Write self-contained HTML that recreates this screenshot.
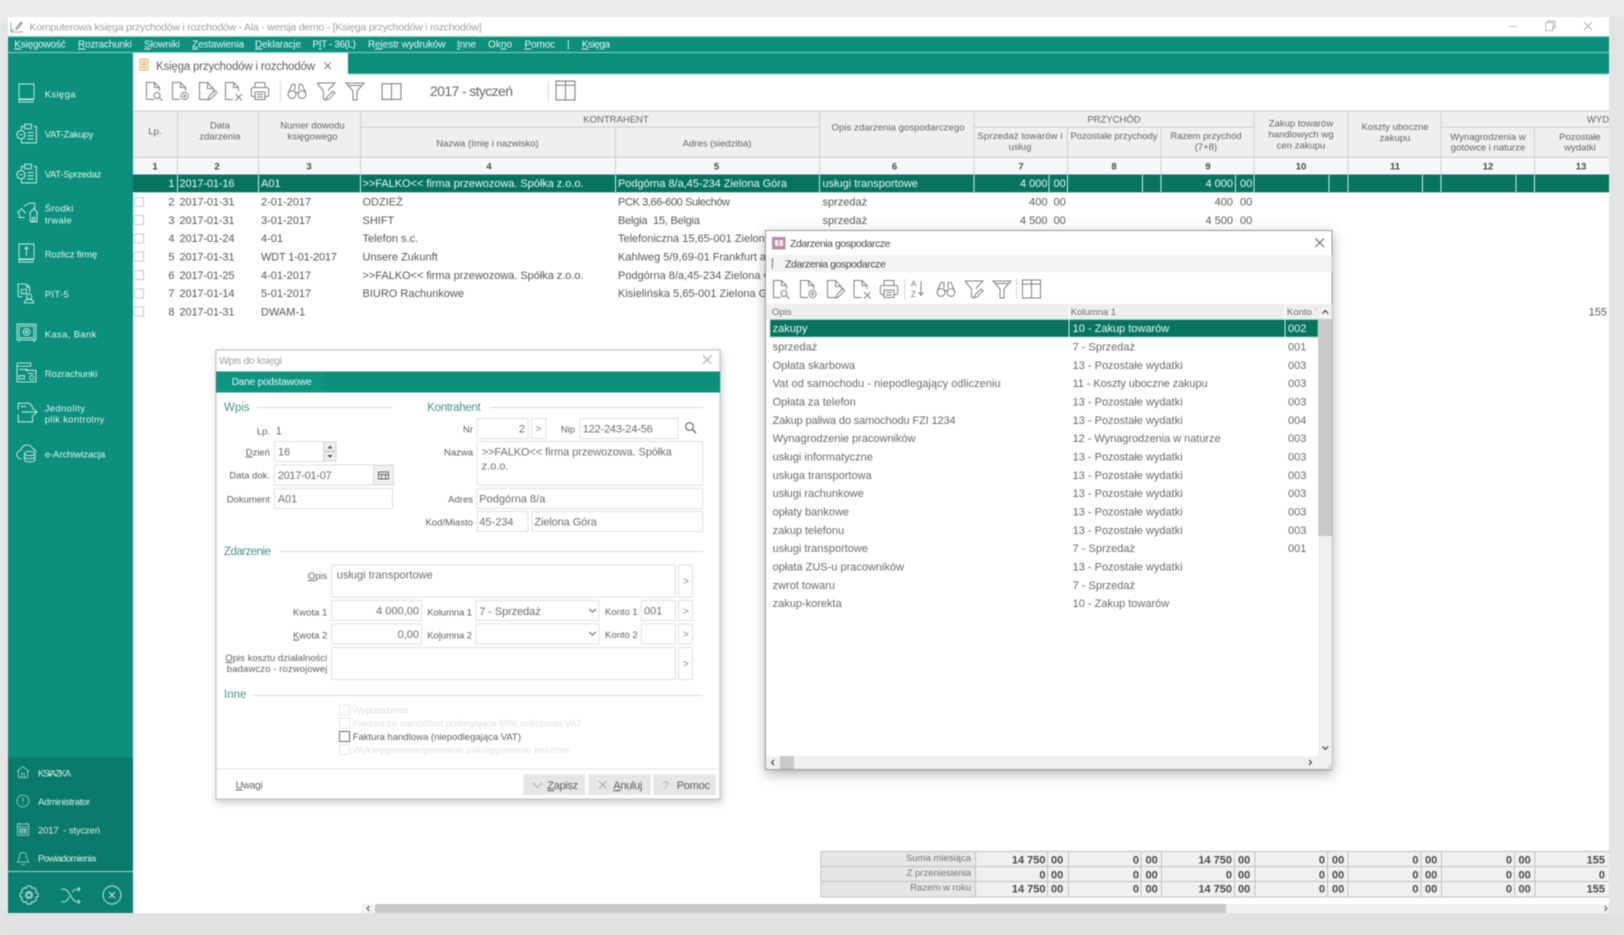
<!DOCTYPE html>
<html lang="pl">
<head>
<meta charset="utf-8">
<title>Księga przychodów i rozchodów</title>
<style>
html,body{margin:0;padding:0;width:1624px;height:935px;overflow:hidden;background:#e9ebec}
svg{display:block;filter:blur(.45px)}
text{font-family:"Liberation Sans",sans-serif;white-space:pre}
.t{font-size:11px;fill:#585858}
.w{font-size:11px;fill:#e8f8f4}
.h{font-size:9.5px;fill:#666;text-anchor:middle}
.n{font-size:9.5px;fill:#4a4a4a;text-anchor:middle;font-weight:bold}
.m{font-size:10px;fill:#e4f7f2}
.s{font-size:9.5px;fill:#dcf4ee;letter-spacing:.35px}
.f{font-size:9.5px;fill:#d6eee9}
.l{font-size:9.5px;fill:#5f5f5f;text-anchor:end}
.v{font-size:11px;fill:#6e6e6e}
.b{font-size:10px;fill:#888}
.sec{font-size:11.5px;fill:#4a968b}
.r{text-anchor:end}
.c{font-size:11px;fill:#6a6a6a}
.d{font-size:9.5px;fill:#e2e2e2}
.sum{font-size:11px;font-weight:bold;fill:#4a4a4a;text-anchor:end}
.sum0{font-size:11px;font-weight:bold;fill:#4a4a4a}
.sl{font-size:9.5px;fill:#777;text-anchor:end}
.fld{fill:#fff;stroke:#e0e0e0;stroke-width:1}
.ic{fill:none;stroke:#808080;stroke-width:1}
.sb{fill:none;stroke:#c9eee6;stroke-width:.9}
.ln{stroke:#cdcdcd;stroke-width:1}
.lt{stroke:#dadada;stroke-width:1}
.wl{stroke:#7ed4c4;stroke-width:1}
</style>
</head>
<body>
<svg xmlns="http://www.w3.org/2000/svg" width="1624" height="935" viewBox="0 0 1624 935">
<defs>
<symbol id="doc" viewBox="0 0 20 20"><path d="M2.5 18.5V1.5h8l5 5V10M10.5 1.5v5h5M2.5 18.5H10"/></symbol>
<symbol id="i-search" viewBox="0 0 20 20"><use href="#doc" width="20" height="20"/><circle cx="13" cy="14.5" r="3"/><path d="M15.2 16.7L18.5 19.7"/></symbol>
<symbol id="i-add" viewBox="0 0 20 20"><use href="#doc" width="20" height="20"/><circle cx="14.5" cy="15" r="3.6"/><circle cx="14.5" cy="15" r="1"/></symbol>
<symbol id="i-edit" viewBox="0 0 20 20"><path d="M2.5 18.5V1.5h8l6 6.5v3M10.5 1.5v6h6M2.5 18.5h8"/><path d="M11 19l1-3.5 6-6 2 2-6 6z"/></symbol>
<symbol id="i-del" viewBox="0 0 20 20"><use href="#doc" width="20" height="20"/><path d="M12.5 13l6.5 6.5m0-6.5L12.5 19.5"/></symbol>
<symbol id="i-print" viewBox="0 0 20 20"><path d="M5 6.5V1.5h10v5M5 15.5H3a1.7 1.7 0 0 1-1.7-1.7V8.5A2 2 0 0 1 3.300 6.5h13.4a2 2 0 0 1 2 2v5.3A1.7 1.7 0 0 1 17 15.5h-2M5 11h10v7.5H5zM7 13.5h6M7 16h6"/></symbol>
<symbol id="i-bin" viewBox="0 0 20 20"><circle cx="5" cy="13.5" r="3.9"/><circle cx="15" cy="13.5" r="3.9"/><path d="M8.5 11.5h3M1.5 11.5L5 3.500h3v6M18.5 11.5L15 3.500h-3v6"/></symbol>
<symbol id="i-fe" viewBox="0 0 20 20"><path d="M1 2h18l-7 7.500M1 2l6.5 8v8l2.500 1"/><path d="M10 19l1-3 6-6 2 2-6 6z"/></symbol>
<symbol id="i-f" viewBox="0 0 20 20"><path d="M1 2h18l-7 8v9H8v-9zM3 4.500h14"/></symbol>
<symbol id="i-book" viewBox="0 0 20 20"><path d="M1 3.500h18v15H1zM10 3.500v15"/></symbol>
<symbol id="i-cols" viewBox="0 0 20 20"><path d="M1 1h18v18H1zM10 1v18M1 5h18"/></symbol>
<symbol id="s-book" viewBox="0 0 20 20"><path d="M2 1h15v15H2zM2 1v18h15M2 16.5h15"/></symbol>
<symbol id="s-clip" viewBox="0 0 20 20"><path d="M7.5 4H5v3M5 15.5V19h13.5V4H16M8 2h6v4H8zM10.5 9.5h5.5M10.5 12.5h5.5M10.5 15.5h5.5"/><circle cx="4.5" cy="11.5" r="3.8"/><path d="M3 11.5h3"/></symbol>
<symbol id="s-asset" viewBox="0 0 20 20"><path d="M1 11l4-4 4 4M3 11v4h5M7 5l5-3h5v6M12 11l4-4 4 4M13 11v8h6v-8M15 19v-4h2v4"/></symbol>
<symbol id="s-up" viewBox="0 0 20 20"><path d="M2 1h15v15H2zM2 1v18h15M2 16.5h15M9.5 13V4M7.5 6l2-2 2 2"/></symbol>
<symbol id="s-pit" viewBox="0 0 20 20"><path d="M2 13V1h8l3 3v5M2 13h4M10 1v3h3M5 6h5v4H5z"/><circle cx="12.5" cy="13" r="2.5"/><path d="M8 19c.5-2.5 2.5-3.5 4.5-3.5s4 1 4.500 3.500z"/></symbol>
<symbol id="s-safe" viewBox="0 0 20 20"><path d="M1 2h18v15H1zM3 4h14v11H3zM3 17v2M17 17v2"/><circle cx="10" cy="9.5" r="3.3"/><circle cx="10" cy="9.5" r="1.2"/></symbol>
<symbol id="s-roz" viewBox="0 0 20 20"><path d="M1 1h13v3H1zM1 4v15h13M3 7h8M3 13h5v3H3zM9 8h10v11h-5M11 11h6"/><circle cx="15" cy="15" r="2"/></symbol>
<symbol id="s-jpk" viewBox="0 0 20 20"><path d="M2 8V2h10l3 3v3M2 12v7h13v-6M5 10h14m-3-3l3 3-3 3M4 5h5"/></symbol>
<symbol id="s-cloud" viewBox="0 0 20 20"><path d="M5 16a4 4 0 0 1-.5-8A6 6 0 0 1 16 6.500a4 4 0 0 1 3 3.500"/><ellipse cx="13" cy="11" rx="5" ry="2"/><path d="M8 11v6c0 1 2 2 5 2s5-1 5-2v-6M8 14c0 1 2 2 5 2s5-1 5-2"/></symbol>
<symbol id="s-home" viewBox="0 0 20 20"><path d="M1 10L10 2l9 8M3.5 8v10h13V8M8 18v-6h4v6"/></symbol>
<symbol id="s-adm" viewBox="0 0 20 20"><circle cx="10" cy="10" r="8.5"/><path d="M10 5v6.500M10 13.500v1.500"/></symbol>
<symbol id="s-cal" viewBox="0 0 20 20"><path d="M2 3h16v16H2zM2 7h16M5 1v3M15 1v3M5 10h10v6H5zM8 10v6M12 10v6M5 13h10"/></symbol>
<symbol id="s-bell" viewBox="0 0 20 20"><path d="M10 2a5 5 0 0 0-5 5c0 5-2 7-3 9h16c-1-2-3-4-3-9a5 5 0 0 0-5-5zM8 18a2 2 0 0 0 4 0"/></symbol>
<symbol id="s-gear" viewBox="0 0 20 20"><path d="M8 1h4l.8 2.5 2-.8 2.700 2.700-.9 2 2.400.8v3.600l-2.400.8.900 2-2.700 2.700-2-.8L12 19H8l-.8-2.5-2 .8-2.700-2.700.9-2L1 11.800V8.200l2.400-.8-.9-2 2.700-2.700 2 .8z"/><circle cx="10" cy="10" r="3.5"/><circle cx="10" cy="10" r="2"/></symbol>
<symbol id="s-shuf" viewBox="0 0 20 20"><path d="M1 4h3c5 0 7 12 12 12h3M1 16h3c2 0 3.500-2 5-5M11.500 7C13 5.200 14.200 4 16 4h3M17 2l2 2-2 2M17 14l2 2-2 2"/></symbol>
<symbol id="s-xc" viewBox="0 0 20 20"><circle cx="10" cy="10" r="9"/><path d="M7 7l6 6m0-6l-6 6"/></symbol>
</defs>

<!-- page frame -->
<rect width="1624" height="935" fill="#e9ebec"/>
<rect x="0" y="905" width="1624" height="30" fill="#dfe1e2"/>
<rect x="0" y="20" width="8" height="890" fill="#e3e5e6"/>
<rect x="1609" y="17" width="15" height="900" fill="#e2e4e5"/>
<rect x="8" y="17" width="1601" height="896" fill="#fff"/>

<!-- title bar -->
<path d="M11 22v10h12M11 32l3-3" fill="none" stroke="#9aa"/>
<path d="M15 29l6-8 2 2-6 7z" fill="#a0a4aa"/>
<text x="29.5" y="30.5" font-size="10.5" fill="#a2a2a2" textLength="452">Komputerowa księga przychodów i rozchodów - Ala - wersja demo - [Księga przychodów i rozchodów]</text>
<path d="M1509 26.500h8" stroke="#c0c0c0"/>
<path d="M1546 22.500h7v8h-7zM1548 22.500v-1.500h7v7h-2" fill="none" stroke="#b5b5b5"/>
<path d="M1584 22l8 8m0-8l-8 8" stroke="#b0b0b0"/>

<!-- menu + tab bar -->
<rect x="8" y="36" width="1601" height="38" fill="#0e8f7c"/>
<line x1="8" y1="36.5" x2="1609" y2="36.5" class="wl"/>
<line x1="8" y1="52.5" x2="1609" y2="52.5" class="wl"/>
<line x1="348" y1="74" x2="1609" y2="74" class="wl"/>
<text class="m" x="14.3" y="47.5" textLength="51.3"><tspan text-decoration="underline">K</tspan>sięgowość</text>
<text class="m" x="78" y="47.5" textLength="54"><tspan text-decoration="underline">R</tspan>ozrachunki</text>
<text class="m" x="144" y="47.5" textLength="36"><tspan text-decoration="underline">S</tspan>łowniki</text>
<text class="m" x="192" y="47.5" textLength="52"><tspan text-decoration="underline">Z</tspan>estawienia</text>
<text class="m" x="255" y="47.5" textLength="46"><tspan text-decoration="underline">D</tspan>eklaracje</text>
<text class="m" x="312.5" y="47.5" textLength="43.5">P<tspan text-decoration="underline">I</tspan>T - 36(L)</text>
<text class="m" x="368" y="47.5" textLength="77.5">R<tspan text-decoration="underline">e</tspan>jestr wydruków</text>
<text class="m" x="457" y="47.5" textLength="19"><tspan text-decoration="underline">I</tspan>nne</text>
<text class="m" x="488" y="47.5" textLength="24">Ok<tspan text-decoration="underline">n</tspan>o</text>
<text class="m" x="524.5" y="47.5" textLength="30.5"><tspan text-decoration="underline">P</tspan>omoc</text>
<text class="m" x="567" y="47.5">|</text>
<text class="m" x="581.7" y="47.5" textLength="28.3"><tspan text-decoration="underline">K</tspan>sięga</text>

<!-- tab -->
<rect x="133" y="53" width="215" height="22" fill="#fff"/>
<rect x="140" y="59" width="8" height="11" fill="#f6ead0" stroke="#e2b878"/>
<path d="M142 62h4M142 64.500h4M142 67h4" stroke="#d8a050"/>
<text x="156" y="70" font-size="11.5" fill="#606060" textLength="159">Księga przychodów i rozchodów</text>
<path d="M324.500 62.500l6.500 6.500m0-6.500l-6.500 6.500" stroke="#777"/>

<!-- sidebar -->
<rect x="8" y="53" width="125" height="860" fill="#0c8f7c"/>
<rect x="8" y="757.5" width="125" height="113.5" fill="#0a7b6b"/>
<rect x="8" y="872" width="125" height="41" fill="#0b8070"/>
<line x1="8" y1="871.5" x2="133" y2="871.5" stroke="#8ad8c9"/>
<g class="sb">
<use href="#s-book" x="17" y="83" width="20" height="20"/>
<use href="#s-clip" x="16" y="122" width="22" height="22"/>
<use href="#s-clip" x="16" y="162" width="22" height="22"/>
<use href="#s-asset" x="16" y="201" width="22" height="22"/>
<use href="#s-up" x="17" y="242" width="20" height="22"/>
<use href="#s-pit" x="16" y="283" width="21" height="21"/>
<use href="#s-safe" x="16" y="322" width="21" height="21"/>
<use href="#s-roz" x="16" y="362" width="21" height="21"/>
<use href="#s-jpk" x="16" y="401" width="22" height="22"/>
<use href="#s-cloud" x="16" y="442" width="21" height="21"/>
<use href="#s-home" x="16" y="765" width="14" height="14"/>
<use href="#s-adm" x="16" y="794" width="14" height="14"/>
<use href="#s-cal" x="16" y="822" width="14" height="14"/>
<use href="#s-bell" x="16" y="851" width="14" height="14"/>
<use href="#s-gear" x="19" y="885" width="20" height="20"/>
<use href="#s-shuf" x="60" y="885" width="21" height="21"/>
<use href="#s-xc" x="102" y="885" width="20" height="20"/>
</g>
<text class="s" x="44.7" y="97.5">Księga</text>
<text class="s" x="44.7" y="137.5" textLength="49">VAT-Zakupy</text>
<text class="s" x="44.7" y="177.5" textLength="57">VAT-Sprzedaż</text>
<text class="s" x="44.7" y="211.5">Środki</text>
<text class="s" x="44.7" y="223.5">trwałe</text>
<text class="s" x="44.7" y="257.5" textLength="53">Rozlicz firmę</text>
<text class="s" x="44.7" y="297.5">PIT-5</text>
<text class="s" x="44.7" y="337.5">Kasa, Bank</text>
<text class="s" x="44.7" y="377" textLength="53">Rozrachunki</text>
<text class="s" x="44.7" y="411.5">Jednolity</text>
<text class="s" x="44.7" y="422.5" textLength="60">plik kontrolny</text>
<text class="s" x="44.7" y="457.5" textLength="61">e-Archiwizacja</text>
<text class="f" x="38" y="776.5" textLength="33">KSIAZKA</text>
<text class="f" x="38" y="805" textLength="52">Administrator</text>
<text class="f" x="38" y="833.5" textLength="62">2017  - styczeń</text>
<text class="f" x="38" y="861.5" textLength="58">Powiadomienia</text>

<!-- main toolbar -->
<g class="ic">
<use href="#i-search" x="144" y="81" width="20" height="20"/>
<use href="#i-add" x="170" y="81" width="20" height="20"/>
<use href="#i-edit" x="197" y="81" width="20" height="20"/>
<use href="#i-del" x="223" y="81" width="20" height="20"/>
<use href="#i-print" x="250" y="81" width="20" height="20"/>
<use href="#i-bin" x="287" y="81" width="20" height="20"/>
<use href="#i-fe" x="316" y="81" width="20" height="20"/>
<use href="#i-f" x="345" y="81" width="20" height="20"/>
<use href="#i-book" x="381" y="80" width="21" height="21"/>
<use href="#i-cols" x="555" y="80" width="21" height="21"/>
</g>
<path d="M280.5 81v20M548.5 81v20" stroke="#d6d6d6"/>
<text x="430" y="96" font-size="14" fill="#6a6a6a" textLength="83">2017 - styczeń</text>

<!-- table header -->
<rect x="133" y="111" width="1476" height="46" fill="#f0efef"/>
<rect x="133" y="157" width="1476" height="17.5" fill="#f7f7f7"/>
<g class="ln">
<line x1="133" y1="111" x2="1609" y2="111"/>
<line x1="360" y1="127" x2="820" y2="127"/>
<line x1="974" y1="127" x2="1254" y2="127"/>
<line x1="1441" y1="127" x2="1609" y2="127"/>
<line x1="133" y1="157.5" x2="1609" y2="157.5"/>
<line x1="177.5" y1="111" x2="177.5" y2="174"/>
<line x1="258.5" y1="111" x2="258.5" y2="174"/>
<line x1="360.5" y1="111" x2="360.5" y2="174"/>
<line x1="615.5" y1="127" x2="615.5" y2="174"/>
<line x1="819.5" y1="111" x2="819.5" y2="174"/>
<line x1="974" y1="111" x2="974" y2="174"/>
<line x1="1067.5" y1="127" x2="1067.5" y2="174"/>
<line x1="1161" y1="127" x2="1161" y2="174"/>
<line x1="1254" y1="111" x2="1254" y2="174"/>
<line x1="1348" y1="111" x2="1348" y2="174"/>
<line x1="1441" y1="111" x2="1441" y2="174"/>
<line x1="1534.5" y1="127" x2="1534.5" y2="174"/>
</g>
<text class="h" x="155" y="134.5">Lp.</text>
<text class="h" x="220" y="128.5">Data</text>
<text class="h" x="220" y="139.5">zdarzenia</text>
<text class="h" x="312.5" y="128.5">Numer dowodu</text>
<text class="h" x="312.5" y="139.5">księgowego</text>
<text class="h" x="616" y="122.5">KONTRAHENT</text>
<text class="h" x="487.5" y="146.5">Nazwa (Imię i nazwisko)</text>
<text class="h" x="717" y="146.5">Adres (siedziba)</text>
<text class="h" x="898" y="130.5" textLength="133">Opis zdarzenia gospodarczego</text>
<text class="h" x="1114" y="122.5">PRZYCHÓD</text>
<text class="h" x="1020" y="139" textLength="85">Sprzedaż towarów i</text>
<text class="h" x="1020" y="150">usług</text>
<text class="h" x="1114" y="139" textLength="87">Pozostałe przychody</text>
<text class="h" x="1206" y="139">Razem przychód</text>
<text class="h" x="1206" y="150">(7+8)</text>
<text class="h" x="1301" y="126.5">Zakup towarów</text>
<text class="h" x="1301" y="137.5">handlowych wg</text>
<text class="h" x="1301" y="148.5">cen zakupu</text>
<text class="h" x="1395" y="130">Koszty uboczne</text>
<text class="h" x="1395" y="141">zakupu</text>
<text class="h" x="1598" y="122.5">WYD</text>
<text class="h" x="1488" y="140">Wynagrodzenia w</text>
<text class="h" x="1488" y="150.5">gotówce i naturze</text>
<text class="h" x="1580" y="140">Pozostałe</text>
<text class="h" x="1580" y="150.5">wydatki</text>
<text class="n" x="155" y="169.5">1</text>
<text class="n" x="217" y="169.5">2</text>
<text class="n" x="309" y="169.5">3</text>
<text class="n" x="489" y="169.5">4</text>
<text class="n" x="716.5" y="169.5">5</text>
<text class="n" x="894.5" y="169.5">6</text>
<text class="n" x="1021" y="169.5">7</text>
<text class="n" x="1114" y="169.5">8</text>
<text class="n" x="1208" y="169.5">9</text>
<text class="n" x="1301" y="169.5">10</text>
<text class="n" x="1395" y="169.5">11</text>
<text class="n" x="1488" y="169.5">12</text>
<text class="n" x="1581" y="169.5">13</text>

<!-- selected row -->
<rect x="133" y="174.5" width="1476" height="17.8" fill="#06745f"/>
<path stroke="#cfeee7" fill="none" d="M177.5 175v17M258.5 175v17M360.5 175v17M615.5 175v17M819.5 175v17M974 175v17M1049 175v17M1067.5 175v17M1142.5 175v17M1161 175v17M1235.5 175v17M1254 175v17M1329 175v17M1348 175v17M1422.5 175v17M1441 175v17M1516 175v17M1534.5 175v17"/>
<text class="w r" x="174.5" y="187">1</text>
<text class="w" x="179.5" y="187" textLength="55">2017-01-16</text>
<text class="w" x="261" y="187">A01</text>
<text class="w" x="362.5" y="187" textLength="221">&gt;&gt;FALKO&lt;&lt; firma przewozowa. Spółka z.o.o.</text>
<text class="w" x="618" y="187" textLength="169">Podgórna 8/a,45-234 Zielona Góra</text>
<text class="w" x="822.5" y="187">usługi transportowe</text>
<text class="w r" x="1047.5" y="187">4 000</text>
<text class="w" x="1053.5" y="187">00</text>
<text class="w r" x="1233" y="187">4 000</text>
<text class="w" x="1240" y="187">00</text>

<!-- rows -->
<g fill="#fff" stroke="#c8c8c8">
<rect x="134.5" y="197.5" width="9" height="9"/>
<rect x="134.5" y="215.5" width="9" height="9"/>
<rect x="134.5" y="234" width="9" height="9"/>
<rect x="134.5" y="252" width="9" height="9"/>
<rect x="134.5" y="270.5" width="9" height="9"/>
<rect x="134.5" y="289" width="9" height="9"/>
<rect x="134.5" y="307" width="9" height="9"/>
</g>
<text class="t r" x="174.5" y="205.5">2</text><text class="t" x="179.5" y="205.5" textLength="55">2017-01-31</text><text class="t" x="261" y="205.5">2-01-2017</text><text class="t" x="362.5" y="205.5">ODZIEŻ</text><text class="t" x="618" y="205.5" textLength="112">PCK 3,66-600 Sulechów</text><text class="t" x="822.5" y="205.5">sprzedaż</text><text class="t r" x="1047.5" y="205.5">400</text><text class="t" x="1053.5" y="205.5">00</text><text class="t r" x="1233" y="205.5">400</text><text class="t" x="1240" y="205.5">00</text>
<text class="t r" x="174.5" y="224">3</text><text class="t" x="179.5" y="224" textLength="55">2017-01-31</text><text class="t" x="261" y="224">3-01-2017</text><text class="t" x="362.5" y="224">SHIFT</text><text class="t" x="618" y="224" textLength="82">Belgia  15, Belgia</text><text class="t" x="822.5" y="224">sprzedaż</text><text class="t r" x="1047.5" y="224">4 500</text><text class="t" x="1053.5" y="224">00</text><text class="t r" x="1233" y="224">4 500</text><text class="t" x="1240" y="224">00</text>
<text class="t r" x="174.5" y="242">4</text><text class="t" x="179.5" y="242" textLength="55">2017-01-24</text><text class="t" x="261" y="242">4-01</text><text class="t" x="362.5" y="242">Telefon s.c.</text><text class="t" x="618" y="242">Telefoniczna 15,65-001 Zielona Góra</text>
<text class="t r" x="174.5" y="260.5">5</text><text class="t" x="179.5" y="260.5" textLength="55">2017-01-31</text><text class="t" x="261" y="260.5" textLength="76">WDT 1-01-2017</text><text class="t" x="362.5" y="260.5">Unsere Zukunft</text><text class="t" x="618" y="260.5">Kahlweg 5/9,69-01 Frankfurt am Oder</text>
<text class="t r" x="174.5" y="279">6</text><text class="t" x="179.5" y="279" textLength="55">2017-01-25</text><text class="t" x="261" y="279">4-01-2017</text><text class="t" x="362.5" y="279" textLength="221">&gt;&gt;FALKO&lt;&lt; firma przewozowa. Spółka z.o.o.</text><text class="t" x="618" y="279">Podgórna 8/a,45-234 Zielona Góra</text>
<text class="t r" x="174.5" y="297">7</text><text class="t" x="179.5" y="297" textLength="55">2017-01-14</text><text class="t" x="261" y="297">5-01-2017</text><text class="t" x="362.5" y="297">BIURO Rachunkowe</text><text class="t" x="618" y="297">Kisielińska 5,65-001 Zielona Góra</text>
<text class="t r" x="174.5" y="315.5">8</text><text class="t" x="179.5" y="315.5" textLength="55">2017-01-31</text><text class="t" x="261" y="315.5">DWAM-1</text><text class="t r" x="1607" y="315.5">155</text>

<!-- summary -->
<rect x="821" y="851" width="155" height="46" fill="#e6e6e6"/>
<rect x="976" y="851" width="633" height="46" fill="#f0f0f0"/>
<path stroke="#c2c2c2" fill="none" d="M821 851.5h788M821 866.5h788M821 881.5h788M821 897h788M821 851v46M975.5 851v46M1047.5 851v46M1068.5 851v46M1141 851v46M1161.5 851v46M1234.5 851v46M1255 851v46M1327.5 851v46M1348 851v46M1421 851v46M1441.5 851v46M1514.5 851v46M1535 851v46"/>
<text class="sl" x="971" y="861">Suma miesiąca</text>
<text class="sl" x="971" y="876">Z przeniesienia</text>
<text class="sl" x="971" y="890.5">Razem w roku</text>
<text class="sum" x="1045.5" y="863.5">14 750</text><text class="sum0" x="1051" y="863.5">00</text><text class="sum" x="1139" y="863.5">0</text><text class="sum0" x="1145.5" y="863.5">00</text><text class="sum" x="1232" y="863.5">14 750</text><text class="sum0" x="1238" y="863.5">00</text><text class="sum" x="1325" y="863.5">0</text><text class="sum0" x="1332" y="863.5">00</text><text class="sum" x="1418.5" y="863.5">0</text><text class="sum0" x="1425" y="863.5">00</text><text class="sum" x="1512" y="863.5">0</text><text class="sum0" x="1518.5" y="863.5">00</text><text class="sum" x="1605" y="863.5">155</text>
<text class="sum" x="1045.5" y="878.5">0</text><text class="sum0" x="1051" y="878.5">00</text><text class="sum" x="1139" y="878.5">0</text><text class="sum0" x="1145.5" y="878.5">00</text><text class="sum" x="1232" y="878.5">0</text><text class="sum0" x="1238" y="878.5">00</text><text class="sum" x="1325" y="878.5">0</text><text class="sum0" x="1332" y="878.5">00</text><text class="sum" x="1418.5" y="878.5">0</text><text class="sum0" x="1425" y="878.5">00</text><text class="sum" x="1512" y="878.5">0</text><text class="sum0" x="1518.5" y="878.5">00</text><text class="sum" x="1605" y="878.5">0</text>
<text class="sum" x="1045.5" y="892.5">14 750</text><text class="sum0" x="1051" y="892.5">00</text><text class="sum" x="1139" y="892.5">0</text><text class="sum0" x="1145.5" y="892.5">00</text><text class="sum" x="1232" y="892.5">14 750</text><text class="sum0" x="1238" y="892.5">00</text><text class="sum" x="1325" y="892.5">0</text><text class="sum0" x="1332" y="892.5">00</text><text class="sum" x="1418.5" y="892.5">0</text><text class="sum0" x="1425" y="892.5">00</text><text class="sum" x="1512" y="892.5">0</text><text class="sum0" x="1518.5" y="892.5">00</text><text class="sum" x="1605" y="892.5">155</text>

<!-- main h-scroll -->
<rect x="362" y="904" width="1247" height="9" fill="#f1f1f1"/>
<rect x="375" y="904" width="851" height="9" fill="#c9c9c9"/>
<path d="M369.5 906l-2.500 2.500 2.500 2.500M1604.5 906l2.500 2.500-2.500 2.500" fill="none" stroke="#555"/>

<!-- dialog: Wpis do ksiegi -->
<rect x="216" y="350" width="504" height="449" fill="#fff" stroke="#bdbdbd" style="filter:drop-shadow(1px 3px 4px rgba(0,0,0,.22))"/>
<text x="219" y="364" font-size="10.5" fill="#a2a2a2" textLength="63">Wpis do księgi</text>
<path d="M703 355.5l8.5 8.5m0-8.5l-8.5 8.5" stroke="#aaa"/>
<rect x="216" y="371.5" width="504" height="21" fill="#0c8f7c"/>
<rect x="216" y="371.5" width="109" height="21" fill="#0f9482"/>
<text x="231.7" y="385" font-size="10" fill="#e0f7f1" textLength="80">Dane podstawowe</text>

<text class="sec" x="224" y="411">Wpis</text><line class="lt" x1="257" y1="407.5" x2="393" y2="407.5"/>
<text class="sec" x="427.3" y="411" textLength="53.4">Kontrahent</text><line class="lt" x1="490" y1="407.5" x2="703" y2="407.5"/>
<text class="l" x="270" y="434.5">Lp.</text><text class="v" x="275.7" y="434.5" font-size="10">1</text>

<rect class="fld" x="274.5" y="441.5" width="49" height="20"/>
<text class="v" x="278" y="455.5">16</text>
<rect x="324" y="442" width="12" height="9" fill="#eee" stroke="#d2d2d2"/>
<rect x="324" y="452" width="12" height="9" fill="#eee" stroke="#d2d2d2"/>
<path d="M327.5 448.5l2.500-3 2.500 3zM327.5 455l2.500 3 2.500-3z" fill="#555"/>
<text class="l" x="270" y="455.5"><tspan text-decoration="underline">D</tspan>zień</text>

<rect class="fld" x="274.5" y="465" width="99" height="20"/>
<rect x="373.5" y="465" width="20" height="20" fill="#efefef" stroke="#dcdcdc"/>
<path d="M378.5 472h10v7h-10zM378.5 474.5h10M381.5 474.5v4.500M385.5 474.5v4.500" fill="none" stroke="#666"/>
<text class="v" x="277.7" y="479" textLength="54">2017-01-07</text>
<text class="l" x="270" y="478.5">Data dok.</text>

<rect class="fld" x="274.5" y="488.5" width="118" height="20"/>
<text class="v" x="277.7" y="502.5">A01</text>
<text class="l" x="270" y="502.5">Dokument</text>

<text class="l" x="473" y="432.5">Nr</text>
<rect class="fld" x="477" y="418.5" width="51" height="20"/>
<text class="v r" x="525" y="432.5">2</text>
<rect class="fld" x="531.5" y="418.5" width="14.5" height="20"/>
<text class="b" x="535.5" y="432">&gt;</text>
<text class="l" x="575" y="432.5">Nip</text>
<rect class="fld" x="580" y="418.5" width="98" height="20"/>
<text class="v" x="582.7" y="432.5" textLength="70">122-243-24-56</text>
<circle cx="689.5" cy="426.5" r="3.8" fill="none" stroke="#666" stroke-width="1.1"/>
<path d="M692.5 429.5l3.500 3.500" stroke="#666" stroke-width="1.3"/>

<text class="l" x="473" y="455.5">Nazwa</text>
<rect class="fld" x="477" y="441.5" width="225.5" height="43.5"/>
<text class="v" x="481.7" y="455.5" textLength="190">&gt;&gt;FALKO&lt;&lt; firma przewozowa. Spółka</text>
<text class="v" x="481.7" y="469.5">z.o.o.</text>

<text class="l" x="473" y="502.5">Adres</text>
<rect class="fld" x="477" y="488.5" width="225.5" height="20"/>
<text class="v" x="479.3" y="502.5">Podgórna 8/a</text>
<text class="l" x="473" y="525.5">Kod/Miasto</text>
<rect class="fld" x="477" y="511.5" width="51" height="20"/>
<text class="v" x="479.3" y="525.5">45-234</text>
<rect class="fld" x="532" y="511.5" width="170.5" height="20"/>
<text class="v" x="534.3" y="525.5" textLength="62.5">Zielona Góra</text>

<text class="sec" x="224" y="555" textLength="47">Zdarzenie</text><line class="lt" x1="279" y1="551.5" x2="703" y2="551.5"/>
<text class="l" x="327.3" y="579"><tspan text-decoration="underline">O</tspan>pis</text>
<rect class="fld" x="331.5" y="565" width="344" height="32"/>
<text class="v" x="336.7" y="578.5" textLength="96">usługi transportowe</text>
<rect class="fld" x="678.5" y="565" width="14" height="32"/>
<text class="b" x="683" y="584.5">&gt;</text>

<text class="l" x="327.3" y="615.5">Kwota 1</text>
<rect class="fld" x="331.5" y="600.5" width="90" height="20"/>
<text class="v r" x="419" y="614.5">4 000,00</text>
<text x="427.3" y="615.5" font-size="9.5" fill="#5f5f5f" textLength="44.7">Kolumna 1</text>
<rect class="fld" x="476" y="600.5" width="123" height="20"/>
<text class="v" x="479.3" y="615" textLength="61.4">7 - Sprzedaż</text>
<path d="M589 609l3.500 3 3.500-3" fill="none" stroke="#666" stroke-width="1.1"/>
<text x="605" y="615" font-size="9.5" fill="#5f5f5f" textLength="32.7">Konto 1</text>
<rect class="fld" x="641.5" y="600.5" width="34" height="20"/>
<text class="v" x="644" y="614.5">001</text>
<rect class="fld" x="678.5" y="600.5" width="14" height="20"/>
<text class="b" x="683" y="614.5">&gt;</text>

<text class="l" x="327.3" y="638.5"><tspan text-decoration="underline">K</tspan>wota 2</text>
<rect class="fld" x="331.5" y="624" width="90" height="20"/>
<text class="v r" x="419" y="638">0,00</text>
<text x="427.3" y="638.5" font-size="9.5" fill="#5f5f5f" textLength="44.7">Ko<tspan text-decoration="underline">l</tspan>umna 2</text>
<rect class="fld" x="476" y="624" width="123" height="20"/>
<path d="M589 632l3.500 3 3.500-3" fill="none" stroke="#666" stroke-width="1.1"/>
<text x="605" y="638" font-size="9.5" fill="#5f5f5f" textLength="32.7">Konto 2</text>
<rect class="fld" x="641.5" y="624" width="34" height="20"/>
<rect class="fld" x="678.5" y="624" width="14" height="20"/>
<text class="b" x="683" y="637.5">&gt;</text>

<text class="l" x="327.3" y="661" textLength="102"><tspan text-decoration="underline">O</tspan>pis kosztu działalności</text>
<text class="l" x="327.3" y="672" textLength="100.5">badawczo - rozwojowej</text>
<rect class="fld" x="331.5" y="647.5" width="344" height="32"/>
<rect class="fld" x="678.5" y="647.5" width="14" height="32"/>
<text class="b" x="683" y="667">&gt;</text>

<text class="sec" x="224" y="698">Inne</text><line class="lt" x1="253.3" y1="695.5" x2="702.7" y2="695.5"/>
<g fill="#fff" stroke="#e6e6e6">
<rect x="339.5" y="705" width="10" height="10"/>
<rect x="339.5" y="718" width="10" height="10"/>
<rect x="339.5" y="744.5" width="10" height="10"/>
</g>
<rect x="339.5" y="731.5" width="10" height="10" fill="#fff" stroke="#666"/>
<text class="d" x="352.7" y="713.5" textLength="55.3">Wyposażenie</text>
<text class="d" x="352.7" y="726.7" textLength="229">Faktura za samochód podlegająca 50% odliczeniu VAT</text>
<text x="352.7" y="740" font-size="9.5" fill="#5f5f5f" textLength="168.3">Faktura handlowa (niepodlegająca VAT)</text>
<text class="d" x="352.7" y="753" textLength="216.6">Wyksięgowanie/ponowne zaksięgowanie kosztów</text>

<line x1="216" y1="769" x2="720" y2="769" stroke="#e2e2e2"/>
<text x="235.7" y="788.5" font-size="10" fill="#5f5f5f" textLength="27"><tspan text-decoration="underline">U</tspan>wagi</text>
<rect x="523.3" y="774.3" width="62" height="20.7" fill="#e6e6e6"/>
<rect x="588.3" y="774.3" width="62.4" height="20.7" fill="#e6e6e6"/>
<rect x="653.3" y="774.3" width="62.4" height="20.7" fill="#e6e6e6"/>
<path d="M533 783l4.500 4.500 4.500-4.500" fill="none" stroke="#aaa"/>
<path d="M599 781l7.500 7.500m0-7.500l-7.500 7.500" stroke="#aaa"/>
<text x="662.5" y="789" font-size="11" fill="#aaa">?</text>
<text x="547.3" y="789" font-size="11" fill="#606060" textLength="30.7"><tspan text-decoration="underline">Z</tspan>apisz</text>
<text x="613.3" y="789" font-size="11" fill="#606060" textLength="29"><tspan text-decoration="underline">A</tspan>nuluj</text>
<text x="676.7" y="789" font-size="11" fill="#606060" textLength="33.3">Pomoc</text>

<!-- dialog: Zdarzenia gospodarcze -->
<rect x="765.5" y="230.5" width="566.5" height="539" fill="#fff" stroke="#9a9a9a" style="filter:drop-shadow(0 4px 6px rgba(0,0,0,.3))"/>
<rect x="772" y="237" width="13.5" height="12.5" fill="#b58ea6"/>
<path d="M775 240h3.500v6H775zM779.5 240h3.500v6h-3.500z" fill="#f4e8ef"/>
<text x="790" y="247" font-size="10.5" fill="#4a4a4a" textLength="100.5">Zdarzenia gospodarcze</text>
<path d="M1315.5 238.5l8.500 8.500m0-8.500l-8.500 8.500" stroke="#666" stroke-width="1.1"/>
<rect x="766" y="255" width="566" height="17" fill="#f3f3f3"/>
<line x1="772.5" y1="258" x2="772.5" y2="269" stroke="#777"/>
<text x="785" y="267.5" font-size="10.5" fill="#4a4a4a" textLength="100.8">Zdarzenia gospodarcze</text>
<g class="ic">
<use href="#i-search" x="771" y="279" width="20" height="20"/>
<use href="#i-add" x="798" y="279" width="20" height="20"/>
<use href="#i-edit" x="825" y="279" width="20" height="20"/>
<use href="#i-del" x="851.5" y="279" width="20" height="20"/>
<use href="#i-print" x="878.5" y="279" width="21" height="20"/>
<use href="#i-bin" x="936" y="279" width="20" height="20"/>
<use href="#i-fe" x="964" y="279" width="20" height="20"/>
<use href="#i-f" x="992" y="279" width="20" height="20"/>
<use href="#i-cols" x="1021.5" y="279" width="20" height="20"/>
<path d="M921 281v14M918.5 292.5l2.500 2.800 2.500-2.800"/>
</g>
<text x="911" y="286.5" font-size="8" fill="#777">A</text>
<text x="911" y="297" font-size="8" fill="#777">Z</text>
<path d="M904.5 279v20M1016.5 279v20" stroke="#d6d6d6"/>

<rect x="766" y="304" width="552" height="15.5" fill="#efeeee"/>
<line x1="1069" y1="304" x2="1069" y2="319" stroke="#fff"/>
<line x1="1285" y1="304" x2="1285" y2="319" stroke="#fff"/>
<text x="772" y="315" font-size="9.5" fill="#707070">Opis</text>
<text x="1070.8" y="315" font-size="9.5" fill="#707070">Kolumna 1</text>
<text x="1287" y="315" font-size="9.5" fill="#707070">Konto ˈ</text>
<rect x="1318" y="304" width="14" height="452" fill="#f0f0f0"/>
<rect x="1318" y="319" width="14" height="217" fill="#c9c9c9"/>
<path d="M1322.5 313.5l2.800-3 2.800 3M1322.5 746.5l2.800 3 2.800-3" fill="none" stroke="#333"/>
<rect x="770" y="319.5" width="548" height="17.5" fill="#06745f" stroke="#a8e4d8" stroke-width=".6"/>
<path d="M1069 319.5v17.5M1285 319.5v17.5" stroke="#cfeee7"/>
<text class="w" x="772.6" y="332">zakupy</text><text class="w" x="1072.6" y="332">10 - Zakup towarów</text><text class="w" x="1288" y="332">002</text>
<text class="c" x="772.6" y="350.5">sprzedaż</text><text class="c" x="1072.6" y="350.5">7 - Sprzedaż</text><text class="c" x="1288" y="350.5">001</text>
<text class="c" x="772.6" y="369">Opłata skarbowa</text><text class="c" x="1072.6" y="369">13 - Pozostałe wydatki</text><text class="c" x="1288" y="369">003</text>
<text class="c" x="772.6" y="387" textLength="228">Vat od samochodu - niepodlegający odliczeniu</text><text class="c" x="1072.6" y="387" textLength="135">11 - Koszty uboczne zakupu</text><text class="c" x="1288" y="387">003</text>
<text class="c" x="772.6" y="405.5">Opłata za telefon</text><text class="c" x="1072.6" y="405.5">13 - Pozostałe wydatki</text><text class="c" x="1288" y="405.5">003</text>
<text class="c" x="772.6" y="424" textLength="183">Zakup paliwa do samochodu FZI 1234</text><text class="c" x="1072.6" y="424">13 - Pozostałe wydatki</text><text class="c" x="1288" y="424">004</text>
<text class="c" x="772.6" y="442">Wynagrodzenie pracowników</text><text class="c" x="1072.6" y="442" textLength="148">12 - Wynagrodzenia w naturze</text><text class="c" x="1288" y="442">003</text>
<text class="c" x="772.6" y="460.5">usługi informatyczne</text><text class="c" x="1072.6" y="460.5">13 - Pozostałe wydatki</text><text class="c" x="1288" y="460.5">003</text>
<text class="c" x="772.6" y="479">usługa transportowa</text><text class="c" x="1072.6" y="479">13 - Pozostałe wydatki</text><text class="c" x="1288" y="479">003</text>
<text class="c" x="772.6" y="497">usługi rachunkowe</text><text class="c" x="1072.6" y="497">13 - Pozostałe wydatki</text><text class="c" x="1288" y="497">003</text>
<text class="c" x="772.6" y="515.5">opłaty bankowe</text><text class="c" x="1072.6" y="515.5">13 - Pozostałe wydatki</text><text class="c" x="1288" y="515.5">003</text>
<text class="c" x="772.6" y="534">zakup telefonu</text><text class="c" x="1072.6" y="534">13 - Pozostałe wydatki</text><text class="c" x="1288" y="534">003</text>
<text class="c" x="772.6" y="552">usługi transportowe</text><text class="c" x="1072.6" y="552">7 - Sprzedaż</text><text class="c" x="1288" y="552">001</text>
<text class="c" x="772.6" y="570.5">opłata ZUS-u pracowników</text><text class="c" x="1072.6" y="570.5">13 - Pozostałe wydatki</text>
<text class="c" x="772.6" y="589">zwrot towaru</text><text class="c" x="1072.6" y="589">7 - Sprzedaż</text>
<text class="c" x="772.6" y="607">zakup-korekta</text><text class="c" x="1072.6" y="607">10 - Zakup towarów</text>
<rect x="766" y="756" width="566" height="13" fill="#f0f0f0"/>
<rect x="780" y="756" width="14" height="13" fill="#c9c9c9"/>
<path d="M774 760l-2.500 2.500 2.500 2.500M1309 760l2.500 2.500-2.500 2.500" fill="none" stroke="#333"/>
<path d="M1328 767h1M1330 767h1M1330 765h1" stroke="#999"/>
</svg>
</body>
</html>
